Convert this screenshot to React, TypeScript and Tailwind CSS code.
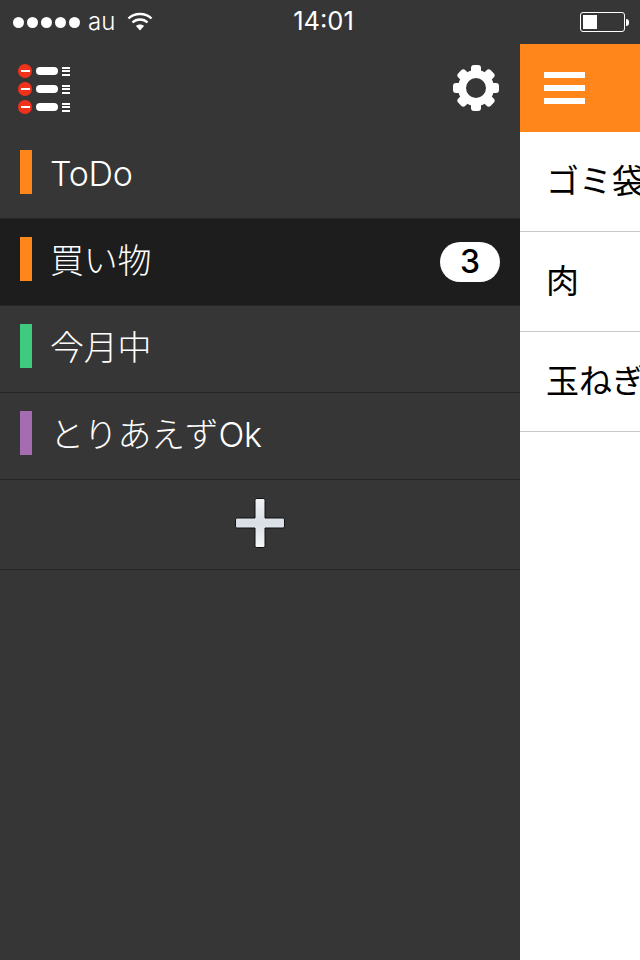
const font = "font-['Inter','Noto_Sans_CJK_JP',sans-serif]";

const lists = [
  { name: "ToDo", bar: "bg-[#ff861b]" },
  { name: "買い物", bar: "bg-[#ff861b]", active: true, count: 3 },
  { name: "今月中", bar: "bg-[#3ecb80]" },
  { name: "とりあえずOk", bar: "bg-[#a56cb2]" },
];

const items = ["ゴミ袋", "肉", "玉ねぎ"];

function StatusBar() {
  return (
    <div className="relative flex h-[44px] items-center justify-between bg-[#363636] pl-[13px] pr-[11px] text-white">
      <div className="flex items-center">
        <div className="flex gap-[3px]">
          {[0, 1, 2, 3, 4].map((i) => (
            <span key={i} className="h-[11px] w-[11px] rounded-full bg-white" />
          ))}
        </div>
        <span className="ml-[8px] text-[24px] font-light leading-none">au</span>
        <svg className="ml-[12px] -mt-[3px]" width="26" height="20" viewBox="0 0 26 20" fill="none">
          <path d="M1.500 7.500C7.500 1.500 18.500 1.500 24.500 7.500" stroke="white" strokeWidth="2.400" />
          <path d="M5.500 11.500C9.500 7.500 16.500 7.500 20.500 11.500" stroke="white" strokeWidth="2.400" />
          <path d="M9 15C11 13 15 13 17 15L13 19.500Z" fill="white" />
        </svg>
      </div>
      <span className="absolute left-[7px] right-0 mb-[2px] text-center text-[25.500px] font-normal leading-none">
        14:01
      </span>
      <div className="flex items-center">
        <div className="h-[20px] w-[45px] rounded-[3px] border border-white p-[2px]">
          <div className="h-full w-[14px] bg-white" />
        </div>
        <div className="ml-[1px] h-[7px] w-[3px] rounded-r-full bg-white" />
      </div>
    </div>
  );
}

function AppLogo() {
  return (
    <div className="flex flex-col gap-[4px]">
      {[0, 1, 2].map((i) => (
        <div key={i} className="flex items-center">
          <div className="flex h-[14px] w-[14px] items-center justify-center rounded-full bg-[#f0321c]">
            <div className="h-[2px] w-[9px] bg-white" />
          </div>
          <div className="ml-[4px] h-[8px] w-[22px] rounded-full bg-white" />
          <div className="ml-[4px] flex flex-col gap-[1.500px]">
            <div className="h-[2px] w-[8px] bg-white" />
            <div className="h-[2px] w-[8px] bg-white" />
            <div className="h-[2px] w-[8px] bg-white" />
          </div>
        </div>
      ))}
    </div>
  );
}

function Gear() {
  const teeth = [0, 45, 90, 135, 180, 225, 270, 315];
  return (
    <svg width="46" height="46" viewBox="0 0 46 46">
      {teeth.map((a) => (
        <rect key={a} x="18" y="0" width="10" height="12" rx="3" fill="white" transform={`rotate(${a} 23 23)`} />
      ))}
      <circle cx="23" cy="23" r="14" fill="none" stroke="white" strokeWidth="8" />
    </svg>
  );
}

function PlusIcon() {
  return (
    <svg width="50" height="50" viewBox="0 0 50 50">
      <defs>
        <linearGradient id="plus" x1="0" y1="0" x2="0" y2="1">
          <stop offset="0" stopColor="#f2f4f6" />
          <stop offset="0.5" stopColor="#d9dfe5" />
          <stop offset="1" stopColor="#f6f7f9" />
        </linearGradient>
      </defs>
      <path
        d="M20 2.500C20 1.200 20.700.5 22 .5h6c1.300 0 2 .7 2 2V20h17.500c1.300 0 2 .7 2 2v6c0 1.300-.7 2-2 2H30v17.500c0 1.300-.7 2-2 2h-6c-1.300 0-2-.7-2-2V30H2.500c-1.300 0-2-.7-2-2v-6c0-1.300.7-2 2-2H20Z"
        fill="url(#plus)"
        stroke="#0f1113"
        strokeWidth="1"
      />
    </svg>
  );
}

export default function App() {
  return (
    <div className={`flex h-[960px] w-[640px] flex-col overflow-hidden bg-[#363636] ${font}`}>
      <StatusBar />
      <div className="flex min-h-0 flex-1">
        <aside className="flex w-[520px] shrink-0 flex-col bg-[#363636]">
          <div className="flex h-[88px] items-start justify-between pl-[18px] pr-[21px] pt-[20px]">
            <AppLogo />
            <div className="mt-[1px]">
              <Gear />
            </div>
          </div>
          {lists.map((l) => (
            <div
              key={l.name}
              className={`flex h-[87px] items-center border-b border-[#262626] px-[20px] ${
                l.active ? "bg-[#1d1d1d]" : ""
              }`}
            >
              <div className={`mb-[6px] h-[44px] w-[12px] ${l.bar}`} />
              <span className="ml-[18px] mb-[2px] flex-1 text-[34px] font-light leading-none tracking-[-0.3px] text-white">
                {l.name}
              </span>
              {l.count ? (
                <span className="flex h-[40px] w-[60px] items-center justify-center rounded-full bg-white text-[32px] font-medium leading-none text-black">
                  {l.count}
                </span>
              ) : null}
            </div>
          ))}
          <div className="flex h-[90px] items-center justify-center border-b border-[#262626] pb-[4px]">
            <PlusIcon />
          </div>
        </aside>
        <main className="min-w-0 flex-1 overflow-hidden bg-white">
          <div className="flex h-[88px] flex-col justify-center gap-[7px] bg-[#ff861b] pl-[24px]">
            <div className="h-[6px] w-[41px] bg-white" />
            <div className="h-[6px] w-[41px] bg-white" />
            <div className="h-[6px] w-[41px] bg-white" />
          </div>
          {items.map((t) => (
            <div
              key={t}
              className="flex h-[100px] items-center overflow-hidden whitespace-nowrap border-b border-[#c8c8c8] pl-[26px] text-[33px] font-normal leading-none text-black"
            >
              {t}
            </div>
          ))}
        </main>
      </div>
    </div>
  );
}
